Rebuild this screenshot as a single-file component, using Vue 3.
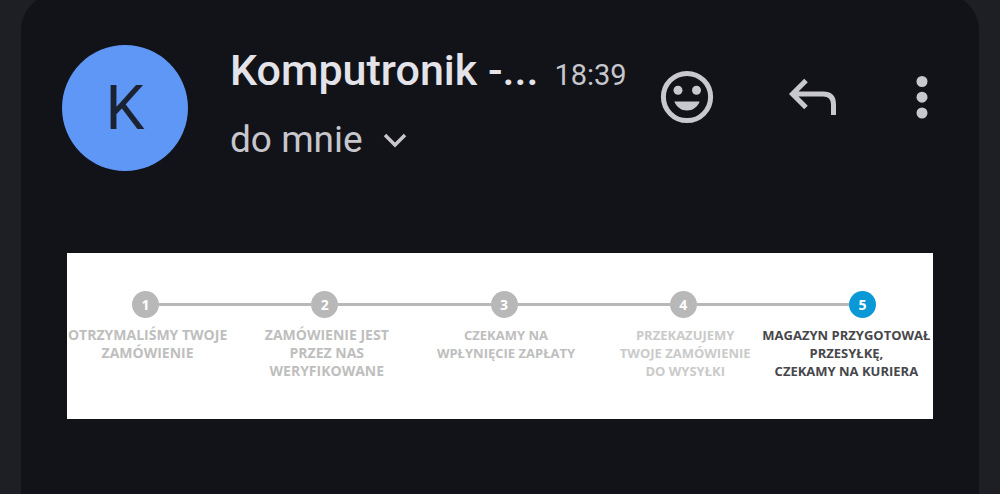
<script setup>
const steps = [
  { lines: ['OTRZYMALIŚMY TWOJE', 'ZAMÓWIENIE'], wide: true },
  { lines: ['ZAMÓWIENIE JEST', 'PRZEZ NAS', 'WERYFIKOWANE'], wide: true },
  { lines: ['CZEKAMY NA', 'WPŁYNIĘCIE ZAPŁATY'] },
  { lines: ['PRZEKAZUJEMY', 'TWOJE ZAMÓWIENIE', 'DO WYSYŁKI'], faded: true },
  { lines: ['MAGAZYN PRZYGOTOWAŁ', 'PRZESYŁKĘ,', 'CZEKAMY NA KURIERA'], current: true },
]
</script>

<template>
  <main class="screen">
    <article class="message">
      <header class="header">
        <div class="avatar">K</div>
        <div class="meta">
          <div class="from">
            <span class="sender">Komputronik -...</span>
            <time class="time">18:39</time>
          </div>
          <button class="recipient" type="button">
            do mnie
            <svg class="chevron" viewBox="0 0 24 16" aria-hidden="true">
              <path d="M2 3 L12 13 L22 3" fill="none" stroke="currentColor" stroke-width="3.5" />
            </svg>
          </button>
        </div>
        <div class="actions">
          <button class="action" type="button" aria-label="Dodaj reakcję">
            <svg viewBox="0 0 62 62" aria-hidden="true">
              <circle cx="30" cy="31" r="23.6" fill="none" stroke="currentColor" stroke-width="5" />
              <circle cx="21" cy="24.2" r="4.5" fill="currentColor" />
              <circle cx="39.5" cy="24.2" r="4.5" fill="currentColor" />
              <path d="M17.3 35.6 H42.7 C40.5 41.2 35.8 44.6 30 44.6 S19.5 41.2 17.3 35.6Z" fill="currentColor" />
            </svg>
          </button>
          <button class="action" type="button" aria-label="Odpowiedz">
            <svg viewBox="0 0 62 62" aria-hidden="true">
              <path d="M24 14.5 L10.5 28 L24 41.5 M10.5 28 H41 Q51.5 28 51.5 38.5 V49" fill="none" stroke="currentColor" stroke-width="5" />
            </svg>
          </button>
          <button class="action more" type="button" aria-label="Więcej opcji">
            <svg viewBox="0 0 30 62" aria-hidden="true">
              <circle cx="15" cy="15.5" r="5.5" fill="currentColor" />
              <circle cx="15" cy="31.2" r="5.5" fill="currentColor" />
              <circle cx="15" cy="47" r="5.5" fill="currentColor" />
            </svg>
          </button>
        </div>
      </header>

      <section class="progress">
        <ol class="steps">
          <li
            v-for="(step, i) in steps"
            :key="i"
            class="step"
            :class="{ current: step.current, faded: step.faded, wide: step.wide }"
          >
            <div class="track"><span class="number">{{ i + 1 }}</span></div>
            <p class="label">
              <span v-for="line in step.lines" :key="line" class="line">{{ line }}</span>
            </p>
          </li>
        </ol>
      </section>
    </article>
  </main>
</template>

<style>
body {
  margin: 0;
  background: #1e1f24;
}
</style>

<style scoped>
.screen {
  min-height: 100vh;
  display: flex;
  box-sizing: border-box;
  padding: 0 21px;
  overflow: hidden;
  background: #1e1f24;
  font-family: Roboto, "Liberation Sans", sans-serif;
}
.message {
  flex: 1;
  min-width: 0;
  margin-top: -6px;
  padding-top: 51px;
  border-radius: 36px 36px 0 0;
  background: #121318;
}
.header {
  display: flex;
  align-items: flex-start;
  padding: 0 42px 0 41px;
}
.avatar {
  flex: none;
  width: 126px;
  height: 126px;
  border-radius: 50%;
  background: #5f97f6;
  color: #1b2333;
  font-size: 62px;
  line-height: 126px;
  text-align: center;
}
.meta {
  flex: 1;
  min-width: 0;
  padding-left: 42px;
}
.from {
  display: flex;
  align-items: baseline;
  gap: 16px;
  line-height: 50px;
  white-space: nowrap;
}
.sender {
  color: #e3e3e9;
  font-size: 43px;
  font-weight: 500;
}
.time {
  color: #c6c6cc;
  font-size: 29px;
}
.recipient {
  display: flex;
  align-items: center;
  gap: 20px;
  margin-top: 16px;
  padding: 0;
  border: 0;
  background: none;
  color: #c6c6cc;
  font: inherit;
  font-size: 37px;
  line-height: 48px;
}
.chevron {
  width: 24px;
  height: 16px;
}
.actions {
  display: flex;
  gap: 63px;
  margin-top: 21px;
}
.action {
  width: 62px;
  height: 62px;
  padding: 0;
  border: 0;
  background: none;
  color: #c8c8ce;
}
.action svg {
  display: block;
  width: 100%;
  height: 100%;
}
.more {
  width: 30px;
}
.progress {
  margin: 82px 46px 0;
  padding: 38px 0 39px;
  overflow: hidden;
  background: #fff;
}
.steps {
  display: grid;
  grid-template-columns: repeat(5, 1fr);
  margin: 0 -19px 0 -11px;
  padding: 0;
  list-style: none;
  font-family: "Open Sans", "Noto Sans", sans-serif;
  font-weight: 700;
}
.track {
  display: flex;
  align-items: center;
}
.track::before,
.track::after {
  content: "";
  flex: 1;
  height: 3px;
  background: #b8b8b8;
}
.step:first-child .track::before,
.step:last-child .track::after {
  background: none;
}
.number {
  width: 27px;
  height: 27px;
  border-radius: 50%;
  background: #b8b8b8;
  color: #fff;
  font-size: 14px;
  line-height: 27px;
  text-align: center;
}
.label {
  margin: 8px 0 0;
  padding-left: 4px;
  color: #bebebe;
  font-size: 13px;
  line-height: 18px;
  text-align: center;
  white-space: nowrap;
}
.line {
  display: block;
}
.wide .label {
  font-size: 14px;
}
.faded .label {
  color: #cacaca;
}
.current .number {
  background: #0a98d6;
}
.current .label {
  margin-left: -36px;
  color: #47474b;
}
</style>
